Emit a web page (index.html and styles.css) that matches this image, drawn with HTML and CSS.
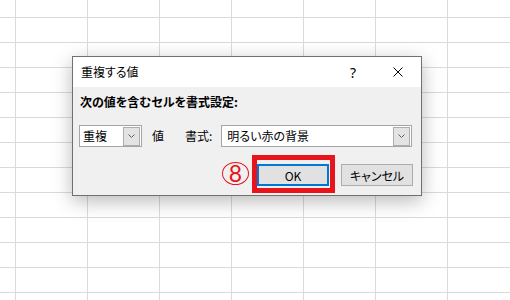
FILE: index.html
```html
<!DOCTYPE html>
<html lang="ja">
<head>
    <meta charset="UTF-8">
    <title>重複する値</title>
    <link rel="stylesheet" href="styles.css">
</head>
<body>
    <div class="dialog">
        <div class="titlebar">
            <span class="title">重複する値</span>
            <span class="help">?</span>
            <span class="close">
                <svg width="10" height="10" viewBox="0 0 10 10"><path d="M0.5 0.5L9.5 9.5M9.5 0.5L0.5 9.5" stroke="#000" stroke-width="1" fill="none"/></svg>
            </span>
        </div>

        <div class="content">
            <div class="heading">次の値を含むセルを書式設定:</div>

            <div class="row">
                <div class="combo combo-small">
                    <span class="combo-text">重複</span>
                    <span class="combo-btn">
                        <svg width="7" height="4" viewBox="0 0 7 4"><path d="M0.5 0.5L3.5 3.5L6.5 0.5" stroke="#5f5f5f" stroke-width="1" fill="none"/></svg>
                    </span>
                </div>
                <span class="label label-value">値</span>
                <span class="label label-format">書式:</span>
                <div class="combo combo-wide">
                    <span class="combo-text">明るい赤の背景</span>
                    <span class="combo-btn">
                        <svg width="7" height="4" viewBox="0 0 7 4"><path d="M0.5 0.5L3.5 3.5L6.5 0.5" stroke="#5f5f5f" stroke-width="1" fill="none"/></svg>
                    </span>
                </div>
            </div>

            <div class="buttons">
                <div class="btn-wrap">
                    <span class="step">8</span>
                    <button class="btn btn-default">OK</button>
                </div>
                <button class="btn">キャンセル</button>
            </div>
        </div>
    </div>
</body>
</html>
```

FILE: styles.css
```css
* {
    margin: 0;
    padding: 0;
    box-sizing: border-box;
}

body {
    width: 510px;
    height: 300px;
    overflow: hidden;
    padding: 56px 0 0 72px;
    background-color: #ffffff;
    background-image:
        linear-gradient(to right, #dadada 1px, transparent 1px),
        linear-gradient(to bottom, #dadada 1px, transparent 1px);
    background-size: 72px 25px;
    background-position: 15px 17px;
    font-family: "Noto Sans CJK JP", "Noto Sans", sans-serif;
    font-feature-settings: "palt";
    font-size: 12px;
    color: #000;
}

/* Dialog window */
.dialog {
    width: 350px;
    height: 140px;
    background: #f0f0f0;
    border: 1px solid #707070;
    box-shadow: 0 5px 18px rgba(0, 0, 0, 0.28);
}

.titlebar {
    height: 30px;
    background: #ffffff;
    display: flex;
    align-items: center;
    padding-left: 8px;
}

.title {
    flex: 1;
    line-height: 16px;
}

.help {
    font-family: "Noto Sans", sans-serif;
    font-size: 14px;
    margin-right: 37px;
}

.close {
    display: flex;
    padding-right: 18px;
}

.content {
    padding: 7px 7px 0 6px;
}

.heading {
    font-weight: bold;
    line-height: 16px;
    padding-left: 1px;
}

/* Combo row */
.row {
    display: flex;
    align-items: center;
    margin-top: 15px;
    height: 22px;
}

.combo {
    height: 22px;
    display: flex;
    align-items: center;
    background: #ffffff;
    border: 1px solid #a5a5a5;
    padding: 0 1px 0 3px;
}

.combo-small {
    width: 63px;
}

.combo-wide {
    width: 191px;
    padding-left: 5px;
}

.combo-text {
    flex: 1;
    line-height: 16px;
    white-space: nowrap;
}

.combo-btn {
    width: 17px;
    height: 19px;
    background: #e3e3e3;
    border: 1px solid #adadad;
    display: flex;
    align-items: center;
    justify-content: center;
}

.label {
    line-height: 16px;
}

.label-value {
    margin-left: 10px;
}

.label-format {
    margin-left: 21px;
    margin-right: 9px;
}

/* Buttons */
.buttons {
    display: flex;
    justify-content: flex-end;
    gap: 12px;
    margin-top: 17px;
    padding-right: 1px;
}

.btn-wrap {
    position: relative;
    display: flex;
}

.btn {
    width: 72px;
    height: 22px;
    background: #e1e1e1;
    border: 1px solid #adadad;
    font-family: inherit;
    font-feature-settings: "palt";
    font-size: 12px;
    color: #000;
}

.btn-default {
    border: 2px solid #0078d7;
}

/* Red highlight around OK */
.btn-wrap::after {
    content: '';
    position: absolute;
    top: -9px;
    left: -5px;
    right: -6px;
    bottom: -7px;
    border: 5px solid #e8141c;
}

.step {
    position: absolute;
    left: -35px;
    top: -2px;
    width: 27px;
    height: 23px;
    border: 1.5px solid #e8141c;
    border-radius: 50%;
    color: #e8141c;
    font-family: "Lato", "Liberation Sans", sans-serif;
    font-size: 23px;
    line-height: 20px;
    text-align: center;
}
```
